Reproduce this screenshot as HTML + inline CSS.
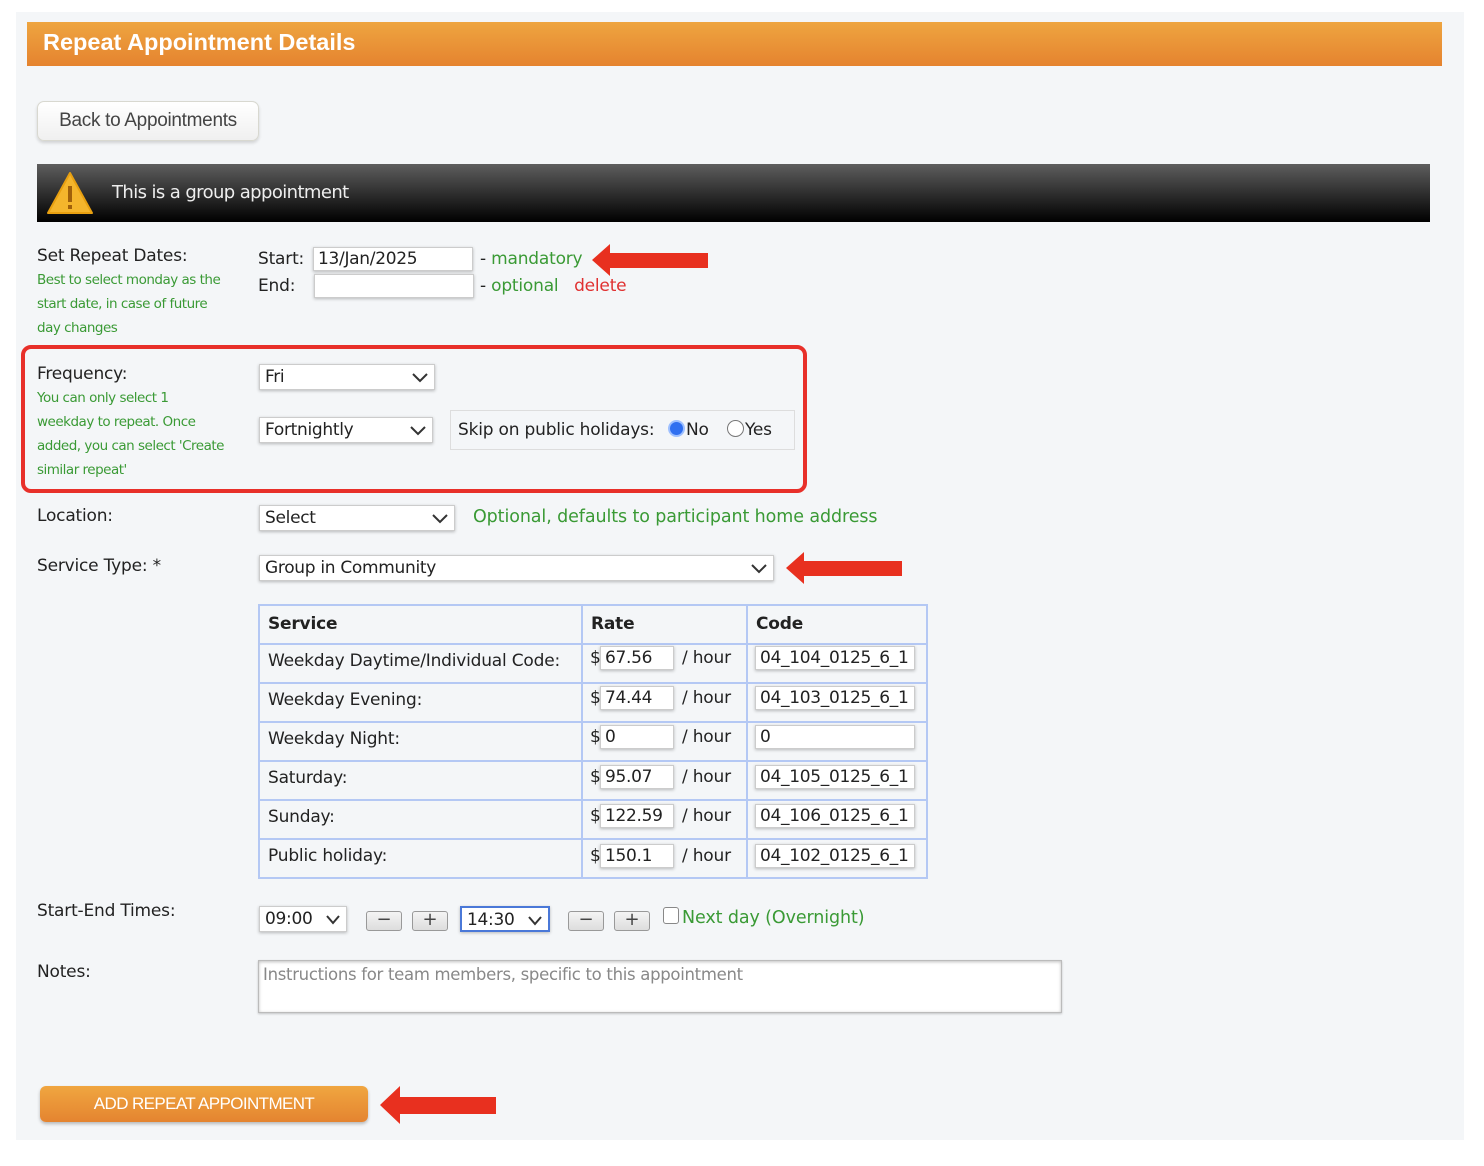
<!DOCTYPE html>
<html><head><meta charset="utf-8"><style>
*{box-sizing:border-box}
body{margin:0;width:1484px;height:1166px;background:#fff;position:relative;font-family:"DejaVu Sans",Verdana,sans-serif;color:#222;overflow:hidden}
.a{position:absolute;white-space:nowrap}
.panel{left:16px;top:12px;width:1448px;height:1128px;background:#f4f6f8}
.lbl{font-size:17px;color:#222;letter-spacing:-0.2px}
.g{color:#3a9a35}
.sg{font-size:13.5px;color:#3a9a35;line-height:24px;letter-spacing:-0.5px}
.inp{background:#fff;border:1px solid #ccc;box-shadow:0 1px 3px rgba(0,0,0,.25);font-size:17px;padding:0 4px;line-height:22px;height:24px;letter-spacing:-0.3px}
.sel{background:#fff;border:1px solid #ccc;box-shadow:0 1px 3px rgba(0,0,0,.25);font-size:17px;padding:0 5px;line-height:24px;height:26px;letter-spacing:-0.3px}
.sel svg{position:absolute;right:6px;top:8px}
.arrow{position:absolute}
table{border-collapse:collapse}
td{border:2px solid #b4c8f4;font-size:17px;letter-spacing:-0.2px;padding:0 8px 6px;height:39px;vertical-align:middle}
.pm{position:absolute;width:36px;height:20px;border:1px solid #999;border-radius:3px;background:linear-gradient(#f4f4f4,#ddd);font-size:18px;line-height:16px;text-align:center;color:#444}
</style></head><body>
<div class="a panel"></div>
<div class="a" style="left:27px;top:22px;width:1415px;height:44px;background:linear-gradient(#eea540,#e5832f);"></div>
<div class="a" style="left:43px;top:29px;font-family:'Liberation Sans',sans-serif;font-weight:bold;font-size:23.5px;color:#fff;">Repeat Appointment Details</div>
<div class="a" style="left:37px;top:101px;width:222px;height:40px;border:1px solid #d8d8d0;border-radius:7px;background:linear-gradient(#fff,#f0f0f0);box-shadow:0 2px 3px rgba(0,0,0,.15);font-family:'Liberation Sans',sans-serif;font-size:19px;color:#444;text-align:center;line-height:38px;letter-spacing:-0.3px">Back to Appointments</div>
<div class="a" style="left:37px;top:164px;width:1393px;height:58px;background:linear-gradient(#5e5e5e,#000);"></div>
<svg class="a" style="left:46px;top:170px" width="48" height="46" viewBox="0 0 48 46"><path d="M24 3 L46 43 L2 43 Z" fill="#f4b52c" stroke="#e8a010" stroke-width="2" stroke-linejoin="round"/><rect x="22" y="16" width="4" height="16" fill="#a0600a"/><rect x="22" y="35" width="4" height="4" fill="#a0600a"/></svg>
<div class="a" style="left:112px;top:182px;font-size:18px;color:#eee;letter-spacing:-0.6px">This is a group appointment</div>

<div class="a lbl" style="left:37px;top:246px;">Set Repeat Dates:</div>
<div class="a sg" style="left:37px;top:268px">Best to select monday as the<br>start date, in case of future<br>day changes</div>
<div class="a lbl" style="left:258px;top:249px;">Start:</div>
<div class="a lbl" style="left:258px;top:276px;">End:</div>
<div class="a inp" style="left:313px;top:247px;width:160px;">13/Jan/2025</div>
<div class="a inp" style="left:314px;top:274px;width:160px;"></div>
<div class="a lbl" style="left:480px;top:249px;">- <span class="g">mandatory</span></div>
<div class="a lbl" style="left:480px;top:276px;">- <span class="g">optional</span> &nbsp; <span style="color:#e03030">delete</span></div>
<svg class="arrow" style="left:592px;top:242px" width="118" height="36"><path d="M0 18 L18 2 L18 11 L116 11 L116 26 L18 26 L18 34 Z" fill="#e8301f"/></svg>

<div class="a" style="left:21px;top:345px;width:786px;height:148px;border:4px solid #e8302a;border-radius:10px"></div>
<div class="a lbl" style="left:37px;top:364px;">Frequency:</div>
<div class="a sg" style="left:37px;top:386px">You can only select 1<br>weekday to repeat. Once<br>added, you can select 'Create<br>similar repeat'</div>
<div class="a sel" style="left:259px;top:364px;width:176px;">Fri<svg width="16" height="10"><path d="M1 1 L8 8 L15 1" fill="none" stroke="#333" stroke-width="2"/></svg></div>
<div class="a sel" style="left:259px;top:417px;width:174px;">Fortnightly<svg width="16" height="10"><path d="M1 1 L8 8 L15 1" fill="none" stroke="#333" stroke-width="2"/></svg></div>
<div class="a" style="left:450px;top:410px;width:345px;height:40px;border:1px solid #ddd;"></div>
<div class="a lbl" style="left:458px;top:420px;">Skip on public holidays:</div>
<div class="a" style="left:668px;top:420px;width:17px;height:17px;border-radius:50%;background:#2f6ff0;border:2px solid #9ec0ff;"></div>
<div class="a lbl" style="left:686px;top:420px;">No</div>
<div class="a" style="left:727px;top:420px;width:17px;height:17px;border-radius:50%;background:#fff;border:1px solid #777"></div>
<div class="a lbl" style="left:745px;top:420px;">Yes</div>

<div class="a lbl" style="left:37px;top:506px;">Location:</div>
<div class="a sel" style="left:259px;top:505px;width:196px;">Select<svg width="16" height="10"><path d="M1 1 L8 8 L15 1" fill="none" stroke="#333" stroke-width="2"/></svg></div>
<div class="a g" style="left:473px;top:507px;font-size:17.5px;letter-spacing:-0.1px">Optional, defaults to participant home address</div>

<div class="a lbl" style="left:37px;top:556px;">Service Type: *</div>
<div class="a sel" style="left:259px;top:555px;width:515px;">Group in Community<svg width="16" height="10"><path d="M1 1 L8 8 L15 1" fill="none" stroke="#333" stroke-width="2"/></svg></div>
<svg class="arrow" style="left:786px;top:550px" width="118" height="36"><path d="M0 18 L18 2 L18 11 L116 11 L116 26 L18 26 L18 34 Z" fill="#e8301f"/></svg>

<table class="a" style="left:258px;top:604px;width:670px">
<tr><td style="width:323px;font-weight:bold;height:35px;padding-bottom:2px">Service</td><td style="width:165px;font-weight:bold;padding-bottom:2px">Rate</td><td style="font-weight:bold;padding-bottom:2px">Code</td></tr>
<tr><td>Weekday Daytime/Individual Code:</td><td></td><td></td></tr>
<tr><td>Weekday Evening:</td><td></td><td></td></tr>
<tr><td>Weekday Night:</td><td></td><td></td></tr>
<tr><td>Saturday:</td><td></td><td></td></tr>
<tr><td>Sunday:</td><td></td><td></td></tr>
<tr><td>Public holiday:</td><td></td><td></td></tr>
</table>
<div class="a lbl" style="left:590px;top:648px">$</div><div class="a inp" style="left:600px;top:646px;width:74px">67.56</div><div class="a lbl" style="left:682px;top:648px">/ hour</div><div class="a inp" style="left:755px;top:646px;width:160px">04_104_0125_6_1</div>
<div class="a lbl" style="left:590px;top:688px">$</div><div class="a inp" style="left:600px;top:686px;width:74px">74.44</div><div class="a lbl" style="left:682px;top:688px">/ hour</div><div class="a inp" style="left:755px;top:686px;width:160px">04_103_0125_6_1</div>
<div class="a lbl" style="left:590px;top:727px">$</div><div class="a inp" style="left:600px;top:725px;width:74px">0</div><div class="a lbl" style="left:682px;top:727px">/ hour</div><div class="a inp" style="left:755px;top:725px;width:160px">0</div>
<div class="a lbl" style="left:590px;top:767px">$</div><div class="a inp" style="left:600px;top:765px;width:74px">95.07</div><div class="a lbl" style="left:682px;top:767px">/ hour</div><div class="a inp" style="left:755px;top:765px;width:160px">04_105_0125_6_1</div>
<div class="a lbl" style="left:590px;top:806px">$</div><div class="a inp" style="left:600px;top:804px;width:74px">122.59</div><div class="a lbl" style="left:682px;top:806px">/ hour</div><div class="a inp" style="left:755px;top:804px;width:160px">04_106_0125_6_1</div>
<div class="a lbl" style="left:590px;top:846px">$</div><div class="a inp" style="left:600px;top:844px;width:74px">150.1</div><div class="a lbl" style="left:682px;top:846px">/ hour</div><div class="a inp" style="left:755px;top:844px;width:160px">04_102_0125_6_1</div>

<div class="a lbl" style="left:37px;top:901px;">Start-End Times:</div>
<div class="a sel" style="left:259px;top:906px;width:88px;">09:00<svg width="14" height="10"><path d="M1 1 L7 8 L13 1" fill="none" stroke="#333" stroke-width="2"/></svg></div>
<div class="pm" style="left:366px;top:911px">−</div><div class="pm" style="left:412px;top:911px">+</div>
<div class="a sel" style="left:460px;top:906px;width:90px;border:2px solid #4a78d8">14:30<svg width="14" height="10"><path d="M1 1 L7 8 L13 1" fill="none" stroke="#333" stroke-width="2"/></svg></div>
<div class="pm" style="left:568px;top:911px">−</div><div class="pm" style="left:614px;top:911px">+</div>
<div class="a" style="left:663px;top:907px;width:16px;height:17px;border:1px solid #888;border-radius:3px;background:#fff"></div>
<div class="a g" style="left:682px;top:908px;font-size:17.5px;letter-spacing:-0.1px">Next day (Overnight)</div>

<div class="a lbl" style="left:37px;top:962px;">Notes:</div>
<div class="a" style="left:258px;top:960px;width:804px;height:53px;background:#fff;border:1px solid #bbb;box-shadow:0 1px 3px rgba(0,0,0,.25) inset, 0 1px 2px rgba(0,0,0,.2);font-size:16.5px;color:#888;padding:4px;letter-spacing:-0.3px">Instructions for team members, specific to this appointment</div>

<div class="a" style="left:40px;top:1086px;width:328px;height:36px;border-radius:6px;background:linear-gradient(#f0a640,#e48430);box-shadow:0 2px 3px rgba(0,0,0,.25);font-family:'Liberation Sans',sans-serif;font-size:17px;color:#fff;text-align:center;line-height:36px;letter-spacing:-0.6px">ADD REPEAT APPOINTMENT</div>
<svg class="arrow" style="left:380px;top:1085px" width="118" height="40"><path d="M0 20 L20 1 L20 12 L116 12 L116 29 L20 29 L20 39 Z" fill="#e8301f"/></svg>
</body></html>
